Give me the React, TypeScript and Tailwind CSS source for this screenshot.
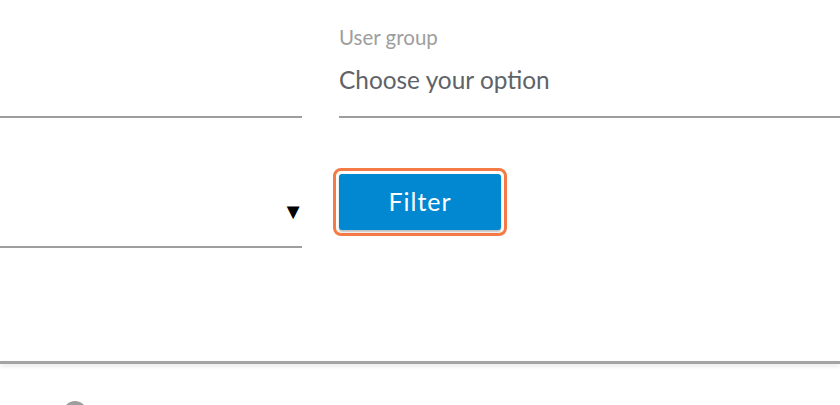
export default function App() {
  return (
    <div className="relative h-[405px] w-[840px] overflow-hidden bg-white font-['Lato','Noto_Sans',sans-serif]">
      <div className="flex">
        <div className="w-[302px] shrink-0">
          <div className="h-[118px] border-b-2 border-[#9e9e9e]" />
          <div className="relative mt-[128px] h-[2px] bg-[#9e9e9e]">
            <span className="absolute right-[-2px] top-[-46px] text-[22px] leading-none text-black">▼</span>
          </div>
        </div>
        <div className="ml-[37px] flex-1">
          <div className="h-[118px] border-b-2 border-[#9e9e9e] pt-[25px]">
            <div className="text-[20.5px] leading-[24px] text-[#9e9e9e]">User group</div>
            <div className="mt-[16px] text-[24.4px] leading-[30px] text-[#5f6368]">Choose your option</div>
          </div>
          <div className="ml-[-6px] mt-[50px] inline-flex rounded-[8px] border-[3px] border-[#f47a46] p-[3px]">
            <button className="h-[56px] w-[162px] rounded-[3px] bg-[#0288d1] text-[25px] tracking-[0.04em] text-white shadow-[0_2px_2px_rgba(0,0,0,0.25)]">
              Filter
            </button>
          </div>
        </div>
      </div>
      <div className="mt-[113px] h-[3px] bg-[#a3a3a3] shadow-[0_2px_4px_rgba(0,0,0,0.12)]" />
      <div className="ml-[63px] mt-[37px] h-[24px] w-[24px] rounded-full bg-[#9e9e9e]" />
    </div>
  );
}
